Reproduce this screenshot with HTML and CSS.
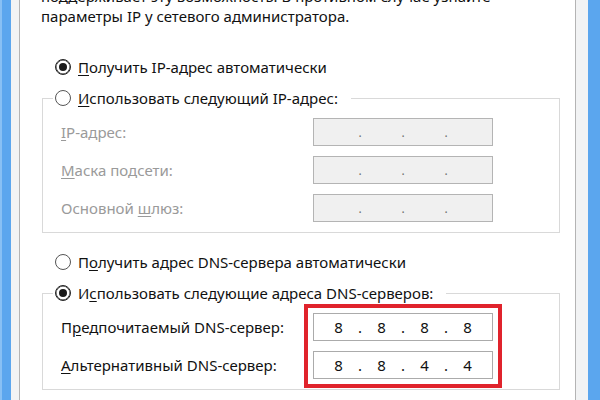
FILE: index.html
```html
<!DOCTYPE html>
<html lang="ru">
<head>
  <meta charset="UTF-8" />
  <title>Свойства: IP версии 4 (TCP/IPv4)</title>
  <link rel="stylesheet" href="styles.css">
</head>

<body>
  <div class="window">
    <div class="dialog">
      <div class="page">
        <p class="intro">поддерживает эту возможность. В противном случае узнайте<br>параметры IP у сетевого администратора.</p>

        <label class="option top-option">
          <span class="radio checked"></span>
          <span><u>П</u>олучить IP-адрес автоматически</span>
        </label>

        <fieldset class="group">
          <legend class="option">
            <span class="radio"></span>
            <span><u>И</u>спользовать следующий IP-адрес:</span>
          </legend>
          <div class="rows">
            <span class="label disabled"><u>I</u>P-адрес:</span>
            <div class="ip disabled">
              <span class="oct"></span><span class="dot">.</span>
              <span class="oct"></span><span class="dot">.</span>
              <span class="oct"></span><span class="dot">.</span>
              <span class="oct"></span>
            </div>

            <span class="label disabled"><u>М</u>аска подсети:</span>
            <div class="ip disabled">
              <span class="oct"></span><span class="dot">.</span>
              <span class="oct"></span><span class="dot">.</span>
              <span class="oct"></span><span class="dot">.</span>
              <span class="oct"></span>
            </div>

            <span class="label disabled">Основной <u>ш</u>люз:</span>
            <div class="ip disabled">
              <span class="oct"></span><span class="dot">.</span>
              <span class="oct"></span><span class="dot">.</span>
              <span class="oct"></span><span class="dot">.</span>
              <span class="oct"></span>
            </div>
          </div>
        </fieldset>

        <label class="option dns-option">
          <span class="radio"></span>
          <span>П<u>о</u>лучить адрес DNS-сервера автоматически</span>
        </label>

        <fieldset class="group">
          <legend class="option">
            <span class="radio checked"></span>
            <span>И<u>с</u>пользовать следующие адреса DNS-серверов:</span>
          </legend>
          <div class="rows dns-rows">
            <span class="label">П<u>р</u>едпочитаемый DNS-сервер:</span>
            <span class="label"><u>А</u>льтернативный DNS-сервер:</span>
            <div class="highlight">
              <div class="ip">
                <span class="oct">8</span><span class="dot">.</span>
                <span class="oct">8</span><span class="dot">.</span>
                <span class="oct">8</span><span class="dot">.</span>
                <span class="oct">8</span>
              </div>
              <div class="ip">
                <span class="oct">8</span><span class="dot">.</span>
                <span class="oct">8</span><span class="dot">.</span>
                <span class="oct">4</span><span class="dot">.</span>
                <span class="oct">4</span>
              </div>
            </div>
          </div>
        </fieldset>
      </div>
    </div>
  </div>
</body>
</html>
```

FILE: styles.css
```css
* {
  box-sizing: border-box;
}

body {
  margin: 0;
  width: 600px;
  height: 400px;
  overflow: hidden;
  font-family: "Noto Sans", "Open Sans", sans-serif;
  font-size: 15px;
  color: #111;
}

/* window frame */
.window {
  height: 400px;
  background: #5ba6ee;
  border-left: 2px solid #88c0f4;
  padding: 0 12px 0 9px;
}

.dialog {
  height: 100%;
  background: #f2f3f4;
  padding: 0 12px 0 8px;
}

.page {
  height: 100%;
  background: #fff;
  border-left: 1px solid #b4b4b4;
  border-right: 1px solid #b4b4b4;
  padding-left: 21px;
  overflow: hidden;
}

.intro {
  margin: -14px 0 0;
  line-height: 20px;
  white-space: nowrap;
}

u {
  text-underline-offset: 2px;
}

/* radio rows */
.option {
  display: flex;
  align-items: center;
  gap: 7px;
  height: 20px;
  white-space: nowrap;
}

.top-option {
  margin: 31px 0 0 14px;
}

.dns-option {
  margin: 19px 0 0 14px;
}

.radio {
  flex: none;
  width: 16px;
  height: 16px;
  border: 1px solid #555;
  border-radius: 50%;
  background: #fff;
  display: flex;
  align-items: center;
  justify-content: center;
}

.radio.checked {
  border-color: #222;
  box-shadow: inset 0 0 0 0.5px #222;
}

.radio.checked::after {
  content: "";
  width: 8px;
  height: 8px;
  border-radius: 50%;
  background: #1a1a1a;
}

/* group boxes */
.group {
  margin: 11px 15px 0 1px;
  padding: 10px 66px 10px 10px;
  border: 1px solid #d9d9d9;
  min-width: 0;
}

.group legend {
  padding: 0 13px 0 2px;
}

.rows {
  display: grid;
  grid-template-columns: 1fr 180px;
  grid-auto-rows: 28px;
  row-gap: 10px;
}

.label {
  align-self: center;
  padding-left: 8px;
  white-space: nowrap;
}

.label.disabled {
  color: #9a9a9a;
}

/* ip address boxes */
.ip {
  height: 28px;
  border: 1px solid #ababab;
  background: #fff;
  display: flex;
  align-items: center;
  padding: 0 3px;
  font-size: 15px;
}

.ip.disabled {
  background: #f0f0f0;
  border-color: #b4b4b4;
}

.oct {
  flex: 1;
  text-align: center;
}

.dot {
  width: 0;
  display: flex;
  justify-content: center;
}

.ip.disabled .dot {
  color: #707070;
  font-size: 12px;
}

.dns-rows .label:nth-child(1) {
  grid-row: 1;
  grid-column: 1;
}

.dns-rows .label:nth-child(2) {
  grid-row: 2;
  grid-column: 1;
}

.highlight {
  grid-column: 2;
  grid-row: 1 / 3;
  display: grid;
  grid-auto-rows: 28px;
  row-gap: 10px;
  outline: 4px solid #e0232c;
  outline-offset: 5px;
}
```
